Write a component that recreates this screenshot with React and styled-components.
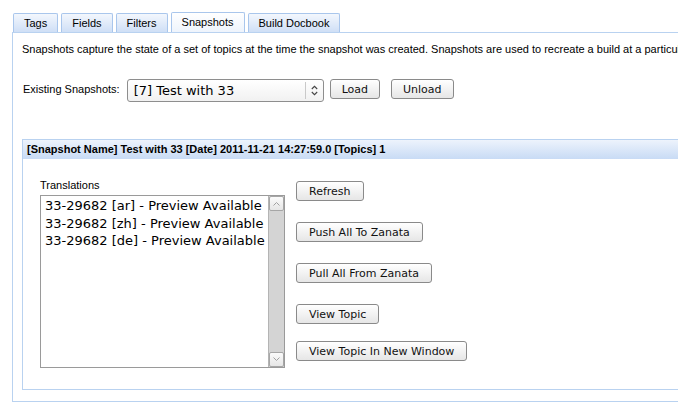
import React from 'react';
import styled, { createGlobalStyle } from 'styled-components';

const Global = createGlobalStyle`
    html, body {
        margin: 0;
        padding: 0;
        background: #ffffff;
        overflow: hidden;
    }
    body {
        font-family: "Liberation Sans", Arial, sans-serif;
        font-size: 11px;
        color: #000;
    }`
;

const Page = styled.div`
    padding: 12px 0 0 12px;
    width: 1000px;`
;

const TabBar = styled.div`
    display: flex;
    align-items: flex-end;
    gap: 3px;
    height: 20px;
    padding-left: 1px;`
;

const Tab = styled.div`
    height: ${p => (p.$active ? '20px' : '19px')};
    box-sizing: border-box;
    padding: 0 10px;
    display: flex;
    align-items: center;
    border: 1px solid #a9c6ec;
    border-bottom: none;
    border-radius: 2px 2px 0 0;
    background: ${p => (p.$active
        ? 'linear-gradient(#ffffff, #eef4fc)'
        : 'linear-gradient(#f3f7fd, #cfdff6)')};
    font-size: 11px;
    line-height: 13px;
    white-space: nowrap;
    cursor: default;`
;

const Panel = styled.div`
    border-top: 1px solid #b9d2f0;
    border-left: 1px solid #b9d2f0;
    border-bottom: 1px solid #b9d2f0;
    padding: 9px 0 11px 9px;`
;

const Intro = styled.div`
    line-height: 14px;
    white-space: nowrap;`
;

const SnapshotRow = styled.div`
    display: flex;
    align-items: flex-start;
    margin-top: 23px;
    padding-left: 1px;
    height: 23px;`
;

const RowLabel = styled.span`
    align-self: center;
    margin-top: -3px;
    margin-right: 7px;
    line-height: 13px;`
;

const Select = styled.div`
    width: 197px;
    height: 23px;
    box-sizing: border-box;
    display: flex;
    border: 1px solid #8e8e8e;
    border-radius: 3px;
    background: linear-gradient(#ffffff, #f1f1f1);
    font-family: "DejaVu Sans", sans-serif;
    font-size: 13px;`
;

const SelectText = styled.div`
    flex: 1;
    padding-left: 6px;
    line-height: 21px;
    white-space: nowrap;`
;

const SelectArrow = styled.div`
    width: 17px;
    border-left: 1px solid #c9c9c9;
    margin: 2px 0;
    display: flex;
    align-items: center;
    justify-content: center;`
;

const Button = styled.button`
    height: 20px;
    box-sizing: border-box;
    margin: 0 0 0 ${p => p.$gap || 0}px;
    padding: 0 11px;
    border: 1px solid #8a8a8a;
    border-radius: 3px;
    background: linear-gradient(#ffffff, #e6e6e6);
    font-family: "DejaVu Sans", sans-serif;
    font-size: 11px;
    font-weight: normal;
    line-height: 13px;
    color: #111;
    white-space: nowrap;
    cursor: default;`
;

const DetailBox = styled.div`
    margin-top: 37px;
    border-top: 1px solid #b9d2f0;
    border-left: 1px solid #b9d2f0;
    border-bottom: 1px solid #b9d2f0;`
;

const DetailHeader = styled.div`
    height: 19px;
    line-height: 19px;
    padding-left: 4px;
    background: linear-gradient(#edf3fc, #c8dbf5);
    font-weight: bold;
    white-space: nowrap;`
;

const DetailBody = styled.div`
    display: flex;
    align-items: flex-start;
    padding: 20px 0 21px 17px;`
;

const ListColumn = styled.div`
    display: flex;
    flex-direction: column;`
;

const FieldLabel = styled.div`
    line-height: 13px;
    margin-bottom: 3px;`
;

const ListBox = styled.div`
    width: 245px;
    height: 173px;
    box-sizing: border-box;
    display: flex;
    border: 1px solid #9a9a9a;
    background: #fff;`
;

const Options = styled.div`
    flex: 1;
    padding: 1px 0 0 4px;
    font-family: "DejaVu Sans", sans-serif;
    font-size: 13px;
    line-height: 17.5px;
    white-space: nowrap;
    overflow: hidden;`
;

const ScrollBar = styled.div`
    width: 15px;
    display: flex;
    flex-direction: column;
    background: #d4d4d4;
    border-left: 1px solid #b4b4b4;`
;

const ScrollTrack = styled.div`
    flex: 1;`
;

const ScrollButton = styled.div`
    height: 15px;
    box-sizing: border-box;
    border: 1px solid #a6a6a6;
    border-radius: 2px;
    background: linear-gradient(#fbfbfb, #e6e6e6);
    display: flex;
    align-items: center;
    justify-content: center;`
;

const ActionColumn = styled.div`
    display: flex;
    flex-direction: column;
    align-items: flex-start;
    margin-left: 11px;
    padding-top: 2px;`
;

const ActionButton = styled(Button)`
    margin: 0 0 ${p => p.$after || 0}px 0;
    padding: 0 12px;`
;

const Chevron = ({ up }) => (
    <svg width="7" height="5" viewBox="0 0 7 5">
        <path
            d={up ? 'M0.5 4.5 L3.5 1.5 L6.5 4.5' : 'M0.5 0.5 L3.5 3.5 L6.5 0.5'}
            fill="none"
            stroke="#a0a0a0"
            strokeWidth="1"
        />
    </svg>
);

const UpDown = () => (
    <svg width="7" height="11" viewBox="0 0 7 11">
        <path d="M0.8 4 L3.5 1.3 L6.2 4" fill="none" stroke="#444" strokeWidth="1.1" />
        <path d="M0.8 7 L3.5 9.7 L6.2 7" fill="none" stroke="#444" strokeWidth="1.1" />
    </svg>
);

const tabs = ['Tags', 'Fields', 'Filters', 'Snapshots', 'Build Docbook'];

const translations = [
    '33-29682 [ar] - Preview Available',
    '33-29682 [zh] - Preview Available',
    '33-29682 [de] - Preview Available',
];

const actions = [
    ['Refresh', 21],
    ['Push All To Zanata', 21],
    ['Pull All From Zanata', 21],
    ['View Topic', 17],
    ['View Topic In New Window', 0],
];

const App = () => {
    return (
        <>
            <Global />
            <Page>
                <TabBar>
                    {tabs.map(t => (
                        <Tab key={t} $active={t === 'Snapshots'}>{t}</Tab>
                    ))}
                </TabBar>
                <Panel>
                    <Intro>
                        Snapshots capture the state of a set of topics at the time the snapshot was created. Snapshots are used to recreate a build at a particular point in time.
                    </Intro>
                    <SnapshotRow>
                        <RowLabel>Existing Snapshots:</RowLabel>
                        <Select>
                            <SelectText>[7] Test with 33</SelectText>
                            <SelectArrow><UpDown /></SelectArrow>
                        </Select>
                        <Button $gap={6}>Load</Button>
                        <Button $gap={11}>Unload</Button>
                    </SnapshotRow>
                    <DetailBox>
                        <DetailHeader>
                            [Snapshot Name] Test with 33 [Date] 2011-11-21 14:27:59.0 [Topics] 1
                        </DetailHeader>
                        <DetailBody>
                            <ListColumn>
                                <FieldLabel>Translations</FieldLabel>
                                <ListBox>
                                    <Options>
                                        {translations.map(t => <div key={t}>{t}</div>)}
                                    </Options>
                                    <ScrollBar>
                                        <ScrollButton><Chevron up /></ScrollButton>
                                        <ScrollTrack />
                                        <ScrollButton><Chevron /></ScrollButton>
                                    </ScrollBar>
                                </ListBox>
                            </ListColumn>
                            <ActionColumn>
                                {actions.map(([label, after]) => (
                                    <ActionButton key={label} $after={after}>{label}</ActionButton>
                                ))}
                            </ActionColumn>
                        </DetailBody>
                    </DetailBox>
                </Panel>
            </Page>
        </>
    );
}

export default App;
